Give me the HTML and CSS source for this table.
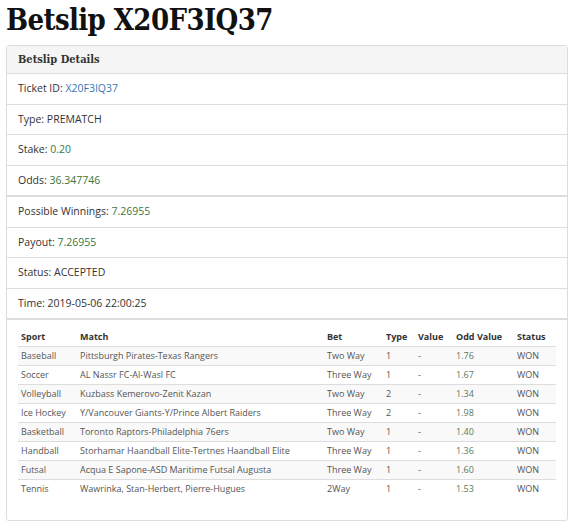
FILE: index.html
```html
<!DOCTYPE html>
<html>
<head>
<meta charset="utf-8">
<link rel="stylesheet" href="styles.css">
</head>
<body>
<h1 class="title">Betslip X20F3IQ37</h1>
<div class="panel">
  <div class="panel-heading">Betslip Details</div>
  <ul class="group">
    <li class="item">Ticket ID: <a class="link" href="#">X20F3IQ37</a></li>
    <li class="item">Type: PREMATCH</li>
    <li class="item">Stake: <span class="val">0.20</span></li>
    <li class="item">Odds: <span class="val">36.347746</span></li>
  </ul>
  <ul class="group">
    <li class="item">Possible Winnings: <span class="val">7.26955</span></li>
    <li class="item">Payout: <span class="val">7.26955</span></li>
    <li class="item">Status: ACCEPTED</li>
    <li class="item">Time: 2019-05-06 22:00:25</li>
  </ul>
  <div class="table-wrap">
    <table class="bets">
      <colgroup>
        <col class="c-sport"><col class="c-match"><col class="c-bet"><col class="c-type"><col class="c-value"><col class="c-odd"><col class="c-status">
      </colgroup>
      <thead>
        <tr><th>Sport</th><th>Match</th><th>Bet</th><th>Type</th><th>Value</th><th>Odd Value</th><th>Status</th></tr>
      </thead>
      <tbody>
        <tr><td>Baseball</td><td>Pittsburgh Pirates-Texas Rangers</td><td>Two Way</td><td>1</td><td>-</td><td class="odd">1.76</td><td>WON</td></tr>
        <tr><td>Soccer</td><td>AL Nassr FC-Al-Wasl FC</td><td>Three Way</td><td>1</td><td>-</td><td class="odd">1.67</td><td>WON</td></tr>
        <tr><td>Volleyball</td><td>Kuzbass Kemerovo-Zenit Kazan</td><td>Two Way</td><td>2</td><td>-</td><td class="odd">1.34</td><td>WON</td></tr>
        <tr><td>Ice Hockey</td><td>Y/Vancouver Giants-Y/Prince Albert Raiders</td><td>Three Way</td><td>2</td><td>-</td><td class="odd">1.98</td><td>WON</td></tr>
        <tr><td>Basketball</td><td>Toronto Raptors-Philadelphia 76ers</td><td>Two Way</td><td>1</td><td>-</td><td class="odd">1.40</td><td>WON</td></tr>
        <tr><td>Handball</td><td>Storhamar Haandball Elite-Tertnes Haandball Elite</td><td>Three Way</td><td>1</td><td>-</td><td class="odd">1.36</td><td>WON</td></tr>
        <tr><td>Futsal</td><td>Acqua E Sapone-ASD Maritime Futsal Augusta</td><td>Three Way</td><td>1</td><td>-</td><td class="odd">1.60</td><td>WON</td></tr>
        <tr><td>Tennis</td><td>Wawrinka, Stan-Herbert, Pierre-Hugues</td><td>2Way</td><td>1</td><td>-</td><td class="odd">1.53</td><td>WON</td></tr>
      </tbody>
    </table>
  </div>
</div>
</body>
</html>
```

FILE: styles.css
```css
html, body {
  margin: 0;
  padding: 0;
  background: #fff;
}
body {
  padding: 0 6px;
  font-family: "Open Sans", "Liberation Sans", sans-serif;
  color: #333;
}
.title {
  font-family: "DejaVu Serif Condensed", "DejaVu Serif", serif;
  font-weight: bold;
  font-size: 29px;
  line-height: 40px;
  margin: 0 0 5px 0;
  height: 40px;
  color: #111;
  letter-spacing: -0.6px;
}
.panel {
  border: 1px solid #ddd;
  border-radius: 3px;
  padding-bottom: 22px;
  box-shadow: 0 1px 1px rgba(0,0,0,0.05);
}
.panel-heading {
  background: #f5f5f5;
  border-bottom: 1px solid #ddd;
  height: 27px;
  line-height: 27px;
  padding: 0 11px;
  font-family: "DejaVu Serif Condensed", "DejaVu Serif", serif;
  font-weight: bold;
  font-size: 11px;
  color: #333;
}
.group {
  list-style: none;
  margin: 0;
  padding: 0;
  border-bottom: 1px solid #ddd;
}
.item {
  padding: 6px 11px;
  line-height: 17.5px;
  font-size: 10.5px;
  border-bottom: 1px solid #ddd;
}
.link {
  color: #337ab7;
  text-decoration: none;
}
.val {
  color: #3c763d;
}
.table-wrap {
  padding: 8px 11px 0;
}
.bets {
  width: 100%;
  border-collapse: collapse;
  font-size: 9px;
  color: #555;
  table-layout: fixed;
}
.c-sport { width: 59px; }
.c-match { width: 247px; }
.c-bet { width: 59px; }
.c-type { width: 32px; }
.c-value { width: 38px; }
.c-odd { width: 61px; }
.c-status { width: 42px; }
.bets th {
  text-align: left;
  font-weight: bold;
  color: #333;
  padding: 2px 3px;
  line-height: 14px;
  border-bottom: 1px solid #ddd;
}
.bets td {
  padding: 2px 3px;
  line-height: 14px;
  border-bottom: 1px solid #ddd;
  white-space: nowrap;
}
.bets tbody tr:nth-child(odd) {
  background: #f9f9f9;
}
.bets tbody tr:last-child td {
  border-bottom: none;
}
.bets td.odd {
  color: #5a7a62;
}
```
